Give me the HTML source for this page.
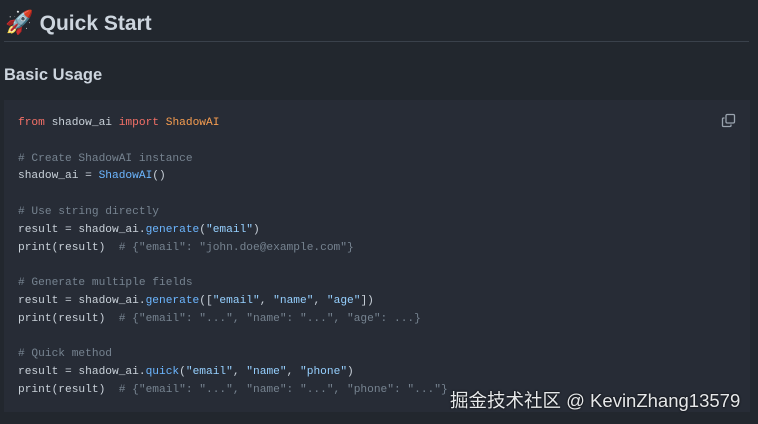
<!DOCTYPE html>
<html><head><meta charset="utf-8"><style>
html,body{margin:0;padding:0;}
body{width:758px;height:424px;overflow:hidden;background:#22272e;font-family:"Liberation Sans",sans-serif;position:relative;}
h1{position:absolute;left:5px;top:7px;margin:0;font-size:21px;font-weight:bold;color:#cdd5de;line-height:30px;}
h1 .e{font-size:23px;margin-right:6px;}
.hr{position:absolute;left:4px;top:41px;width:745px;height:1px;background:#3a414b;}
h2{position:absolute;left:4px;top:64px;margin:0;font-size:16.5px;font-weight:bold;color:#cdd5de;line-height:22px;}
.code{position:absolute;left:4px;top:100px;width:746px;height:312px;background:#272c36;}
pre{position:absolute;left:18px;top:115px;margin:0;font-family:"Liberation Mono",monospace;font-size:11.2px;line-height:17.8px;color:#c9d1d9;}
.k{color:#f47067}.t{color:#f69d50}.c{color:#768390}.f{color:#6cb6ff}.s{color:#96d0ff}
.copy{position:absolute;left:721px;top:113px;}
.wm{position:absolute;left:450px;top:387px;font-family:"Liberation Sans","Noto Sans CJK SC",sans-serif;font-size:18.5px;color:#e6e8ea;text-shadow:0 0 2px #000;white-space:nowrap;}
</style></head><body>
<h1><span class="e">🚀</span>Quick Start</h1>
<div class="hr"></div>
<h2>Basic Usage</h2>
<div class="code"></div>
<pre><span class="k">from</span> shadow_ai <span class="k">import</span> <span class="t">ShadowAI</span>

<span class="c"># Create ShadowAI instance</span>
shadow_ai = <span class="f">ShadowAI</span>()

<span class="c"># Use string directly</span>
result = shadow_ai.<span class="f">generate</span>(<span class="s">"email"</span>)
print(result)  <span class="c"># {"email": "john.doe@example.com"}</span>

<span class="c"># Generate multiple fields</span>
result = shadow_ai.<span class="f">generate</span>([<span class="s">"email"</span>, <span class="s">"name"</span>, <span class="s">"age"</span>])
print(result)  <span class="c"># {"email": "...", "name": "...", "age": ...}</span>

<span class="c"># Quick method</span>
result = shadow_ai.<span class="f">quick</span>(<span class="s">"email"</span>, <span class="s">"name"</span>, <span class="s">"phone"</span>)
print(result)  <span class="c"># {"email": "...", "name": "...", "phone": "..."}</span></pre>
<svg class="copy" width="15" height="15" viewBox="0 0 15 15" fill="none" stroke="#9aa4af" stroke-width="1.3"><rect x="5" y="1.5" width="8.5" height="8.5" rx="1.2"/><path d="M3.5 5H2.5a1 1 0 0 0-1 1v6.5a1 1 0 0 0 1 1H9a1 1 0 0 0 1-1v-1"/></svg>
<div class="wm">掘金技术社区 @ KevinZhang13579</div>
</body></html>
